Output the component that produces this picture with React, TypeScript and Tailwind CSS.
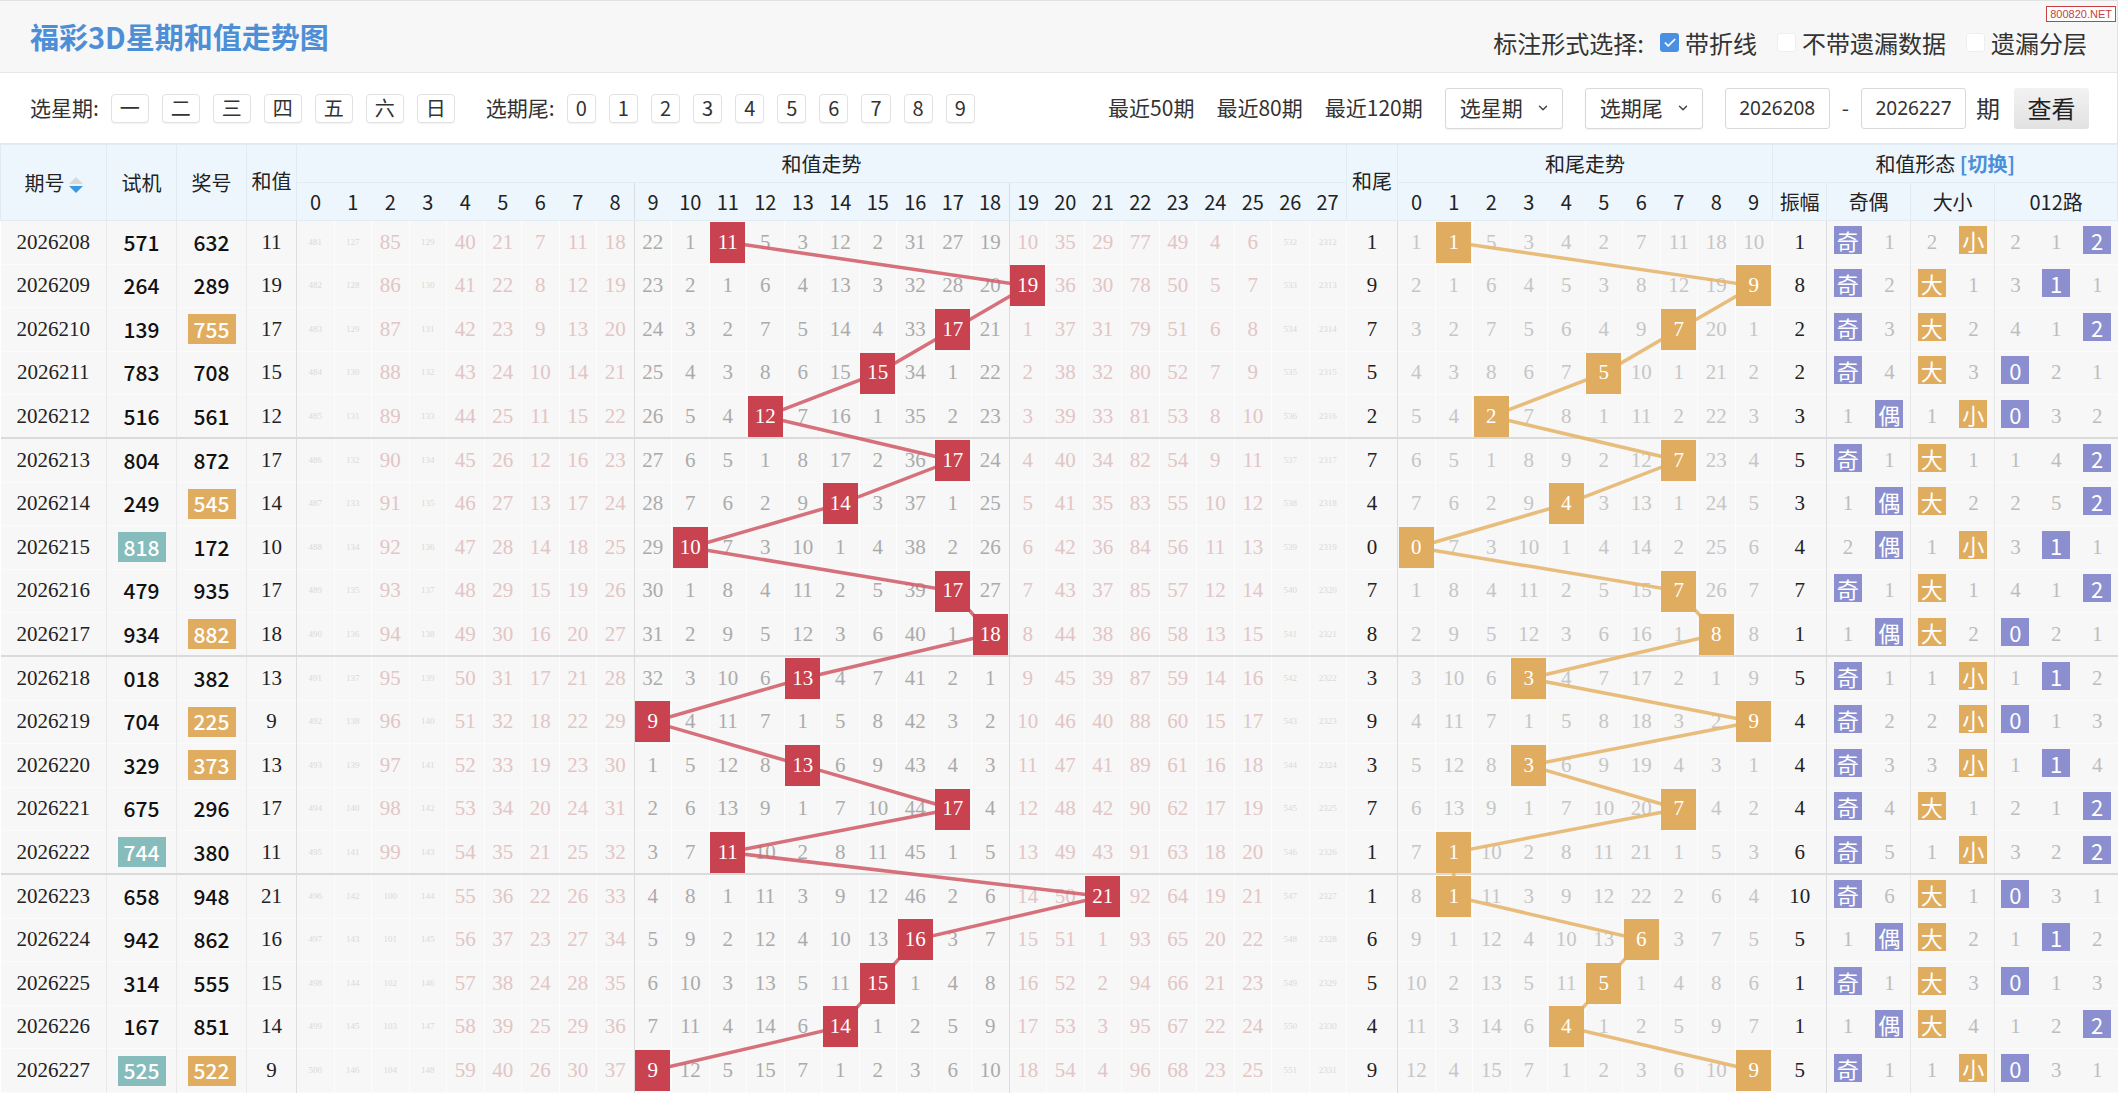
import { useLayoutEffect, useRef, useState } from 'react';
import { ChevronDown, Check } from 'lucide-react';

// ============================================================
// 数据
// ============================================================

const DRAWS: [string, string, string][] = [
  ['2026208', '571', '632'],
  ['2026209', '264', '289'],
  ['2026210', '139', '755'],
  ['2026211', '783', '708'],
  ['2026212', '516', '561'],
  ['2026213', '804', '872'],
  ['2026214', '249', '545'],
  ['2026215', '818', '172'],
  ['2026216', '479', '935'],
  ['2026217', '934', '882'],
  ['2026218', '018', '382'],
  ['2026219', '704', '225'],
  ['2026220', '329', '373'],
  ['2026221', '675', '296'],
  ['2026222', '744', '380'],
  ['2026223', '658', '948'],
  ['2026224', '942', '862'],
  ['2026225', '314', '555'],
  ['2026226', '167', '851'],
  ['2026227', '525', '522'],
];

// 第一期的遗漏值（命中列随意）
const SUM_FIRST = [481, 127, 85, 129, 40, 21, 7, 11, 18, 22, 1, 0, 5, 3, 12, 2, 31, 27, 19, 10, 35, 29, 77, 49, 4, 6, 532, 2312];
const TAIL_FIRST = [1, 0, 5, 3, 4, 2, 7, 11, 18, 10];

const isPair = (n: string) => {
  const s = new Set(n.split(''));
  return s.size === 2;
};

type Row = {
  no: string;
  test: string;
  win: string;
  sum: number;
  tail: number;
  amp: number;
  sums: number[];
  tails: number[];
  oe: [number, number];
  bs: [number, number];
  mod: [number, number, number];
};

function buildRows(): Row[] {
  const sm = SUM_FIRST.map((v) => v - 1);
  const tm = TAIL_FIRST.map((v) => v - 1);
  let oe: [number, number] = [0, 0];
  let bs: [number, number] = [1, 0];
  let md: [number, number, number] = [1, 0, 0];
  let prev = 10;
  return DRAWS.map(([no, test, win]) => {
    const sum = win.split('').reduce((a, d) => a + Number(d), 0);
    const tail = sum % 10;
    const sums = sm.map((v, c) => (c === sum ? -1 : v + 1));
    sums.forEach((v, c) => (sm[c] = v === -1 ? 0 : v));
    const tails = tm.map((v, c) => (c === tail ? -1 : v + 1));
    tails.forEach((v, c) => (tm[c] = v === -1 ? 0 : v));
    const odd = sum % 2 === 1 ? 0 : 1;
    oe = oe.map((v, i) => (i === odd ? -1 : v + 1)) as [number, number];
    const rOe = [...oe] as [number, number];
    oe = oe.map((v) => (v === -1 ? 0 : v)) as [number, number];
    const big = sum >= 14 ? 0 : 1;
    bs = bs.map((v, i) => (i === big ? -1 : v + 1)) as [number, number];
    const rBs = [...bs] as [number, number];
    bs = bs.map((v) => (v === -1 ? 0 : v)) as [number, number];
    const m = sum % 3;
    md = md.map((v, i) => (i === m ? -1 : v + 1)) as [number, number, number];
    const rMd = [...md] as [number, number, number];
    md = md.map((v) => (v === -1 ? 0 : v)) as [number, number, number];
    const amp = Math.abs(sum - prev);
    prev = sum;
    return { no, test, win, sum, tail, amp, sums, tails, oe: rOe, bs: rBs, mod: rMd };
  });
}

const ROWS = buildRows();

// ============================================================
// 小组件
// ============================================================

function SortIcon() {
  return (
    <span className="ml-1 inline-flex flex-col gap-[2px] align-middle">
      <span className="h-0 w-0 border-x-[7px] border-b-[7px] border-x-transparent border-b-[#d3d9de]" />
      <span className="h-0 w-0 border-x-[7px] border-t-[7px] border-x-transparent border-t-[#3a98de]" />
    </span>
  );
}

function Box({ checked, label }: { checked?: boolean; label: string }) {
  return (
    <span className="flex items-center gap-[6px]">
      {checked ? (
        <span className="flex h-[19px] w-[19px] items-center justify-center rounded-[3px] bg-[#4a90e2]">
          <Check className="h-[14px] w-[14px] text-white" strokeWidth={3} />
        </span>
      ) : (
        <span className="h-[19px] w-[19px] rounded-[3px] border border-[#eeeeee] bg-white" />
      )}
      {label}
    </span>
  );
}

function Chip({ t }: { t: string }) {
  return (
    <span className="flex h-[29px] items-center rounded-[4px] border border-[#e2e2e2] bg-white px-[8px] text-[20px] leading-none shadow-[0_1px_1px_rgba(0,0,0,0.05)]">
      {t}
    </span>
  );
}

function Badge({ t, orange }: { t: string; orange?: boolean }) {
  return (
    <span
      className={
        orange
          ? 'inline-flex h-[28px] w-[28px] items-center justify-center bg-[#e0ad5f] font-["Noto_Sans_CJK_SC",sans-serif] text-[22px] leading-none text-white'
          : 'inline-flex h-[28px] w-[28px] items-center justify-center bg-[#8b8fd0] font-["Noto_Sans_CJK_SC",sans-serif] text-[22px] leading-none text-white'
      }
    >
      {t}
    </span>
  );
}

function Select({ t }: { t: string }) {
  return (
    <span className="ml-[22px] flex h-[41px] w-[118px] items-center justify-between rounded-[3px] border border-[#d9d9d9] bg-white pl-[14px] pr-[12px] shadow-[0_1px_2px_rgba(0,0,0,0.06)]">
      {t}
      <ChevronDown className="h-[14px] w-[14px] text-[#444]" strokeWidth={2.5} />
    </span>
  );
}

// ============================================================
// 主组件
// ============================================================

export default function App() {
  const wrapRef = useRef<HTMLDivElement>(null);
  const [lines, setLines] = useState({ sum: '', tail: '', w: 0, h: 0 });

  // 折线：测量命中格中心
  useLayoutEffect(() => {
    const measure = () => {
      const el = wrapRef.current;
      if (!el) return;
      const base = el.getBoundingClientRect();
      const pts = (k: string) =>
        Array.from(el.querySelectorAll(`[data-line="${k}"]`))
          .map((n) => {
            const r = n.getBoundingClientRect();
            return `${r.left + r.width / 2 - base.left},${r.top + r.height / 2 - base.top}`;
          })
          .join(' ');
      setLines({ sum: pts('sum'), tail: pts('tail'), w: base.width, h: base.height });
    };
    measure();
    document.fonts?.ready.then(measure);
  }, []);

  const th = 'h-[38px] p-0 text-center align-middle text-[20px] font-normal text-[#222] border border-[#e1ebf3]';
  const td = 'h-[43.6px] p-0 text-center align-middle';

  return (
    <div className="relative w-[2118px] border-r border-t border-[#e3e3e3] bg-white font-['Noto_Sans_CJK_SC',sans-serif] text-[#333]">
      {/* 水印 */}
      <div className="absolute right-[1px] top-[5px] z-20 border border-[#c94040] bg-white px-[3px] font-['Liberation_Sans',sans-serif] text-[11px] leading-[14px] text-[#c94040]">
        800820.NET
      </div>

      {/* 标题栏 */}
      <div className="flex h-[72px] items-center justify-between border-b border-[#e6e6e6] bg-[#f7f7f7] pl-[30px] pr-[30px]">
        <h1 className="text-[29px] font-bold text-[#4d8fd6]">福彩3D星期和值走势图</h1>
        <div className="flex items-center gap-[20px] pt-[12px] text-[24px] text-[#333]">
          <span className="flex items-center gap-[16px]">
            标注形式选择:
            <Box checked label="带折线" />
          </span>
          <Box label="不带遗漏数据" />
          <Box label="遗漏分层" />
        </div>
      </div>

      {/* 筛选栏 */}
      <div className="flex h-[71px] items-center border-b border-[#e6e6e6] pl-[30px] pr-[28px] text-[21px]">
        <span className="mr-[12px]">选星期:</span>
        <div className="flex gap-[13px]">
          {['一', '二', '三', '四', '五', '六', '日'].map((d) => (
            <Chip key={d} t={d} />
          ))}
        </div>
        <span className="ml-[31px] mr-[12px]">选期尾:</span>
        <div className="flex gap-[13px]">
          {['0', '1', '2', '3', '4', '5', '6', '7', '8', '9'].map((d) => (
            <Chip key={d} t={d} />
          ))}
        </div>
        <div className="ml-auto flex items-center">
          <span>最近50期</span>
          <span className="ml-[22px]">最近80期</span>
          <span className="ml-[22px]">最近120期</span>
          <Select t="选星期" />
          <Select t="选期尾" />
          <span className="ml-[22px] flex h-[41px] w-[105px] items-center justify-center rounded-[3px] border border-[#d9d9d9] bg-white font-['Noto_Sans',sans-serif] text-[19px]">
            2026208
          </span>
          <span className="mx-[12px]">-</span>
          <span className="flex h-[41px] w-[105px] items-center justify-center rounded-[3px] border border-[#d9d9d9] bg-white font-['Noto_Sans',sans-serif] text-[19px]">
            2026227
          </span>
          <span className="ml-[10px] text-[24px]">期</span>
          <span className="ml-[14px] flex h-[41px] w-[75px] items-center justify-center rounded-[3px] bg-gradient-to-b from-[#f2f2f2] to-[#e2e2e2] text-[24px] text-[#222]">
            查看
          </span>
        </div>
      </div>

      {/* 走势表 */}
      <div ref={wrapRef} className="relative">
        <svg
          className="pointer-events-none absolute left-0 top-0 z-[5]"
          width={lines.w}
          height={lines.h}
        >
          <polyline points={lines.sum} fill="none" stroke="#d2606d" strokeWidth={3.5} strokeOpacity={0.9} />
          <polyline points={lines.tail} fill="none" stroke="#e6b66e" strokeWidth={3.5} strokeOpacity={0.9} />
        </svg>

        <table className="w-[2117px] table-fixed border-collapse">
          <colgroup>
            <col className="w-[106px]" />
            <col className="w-[70px]" />
            <col className="w-[70px]" />
            <col className="w-[50px]" />
            {SUM_FIRST.map((_, i) => (
              <col key={'s' + i} className="w-[37.5px]" />
            ))}
            <col className="w-[51px]" />
            {TAIL_FIRST.map((_, i) => (
              <col key={'t' + i} className="w-[37.5px]" />
            ))}
            <col className="w-[54px]" />
            <col className="w-[42px]" />
            <col className="w-[42px]" />
            <col className="w-[42px]" />
            <col className="w-[42px]" />
            <col className="w-[41px]" />
            <col className="w-[41px]" />
            <col className="w-[41px]" />
          </colgroup>
          <thead className="bg-[#eef6fd]">
            <tr>
              <th rowSpan={2} className={th + ' font-bold text-[#111]'}>
                期号
                <SortIcon />
              </th>
              <th rowSpan={2} className={th}>试机</th>
              <th rowSpan={2} className={th}>奖号</th>
              <th rowSpan={2} className={th + ' pb-[4px]'}>和值</th>
              <th colSpan={28} className={th}>和值走势</th>
              <th rowSpan={2} className={th + ' pb-[4px]'}>和尾</th>
              <th colSpan={10} className={th}>和尾走势</th>
              <th colSpan={8} className={th}>
                和值形态 <span className="font-bold text-[#4a8fd8]">[切换]</span>
              </th>
            </tr>
            <tr>
              {SUM_FIRST.map((_, i) => (
                <th
                  key={'hs' + i}
                  className={
                    i === 8 || i === 18
                      ? 'h-[38px] border-y border-r border-[#e1ebf3] border-r-[#d8dde2] p-0 font-normal text-[20px] text-[#222]'
                      : 'h-[38px] border-y border-[#e1ebf3] p-0 font-normal text-[20px] text-[#222]'
                  }
                >
                  {i}
                </th>
              ))}
              {TAIL_FIRST.map((_, i) => (
                <th key={'ht' + i} className="h-[38px] border-y border-[#e1ebf3] p-0 font-normal text-[20px] text-[#222]">
                  {i}
                </th>
              ))}
              <th className={th}>振幅</th>
              <th colSpan={2} className={th}>奇偶</th>
              <th colSpan={2} className={th}>大小</th>
              <th colSpan={3} className={th}>012路</th>
            </tr>
          </thead>
          <tbody className="bg-[#f7f7f7] font-['Liberation_Serif',serif] text-[21px]">
            {ROWS.map((r, ri) => (
              <tr
                key={r.no}
                className={
                  ri % 5 === 4 && ri !== ROWS.length - 1
                    ? 'border-b-2 border-b-[#dadada]'
                    : 'border-b border-b-[#fbfbfb]'
                }
              >
                <td className={td + ' border-r border-[#e9e9e9] text-[#222]'}>{r.no}</td>
                <td className={td + " border-r border-[#e9e9e9] font-['Noto_Sans_CJK_SC',sans-serif] text-[21px] font-medium text-[#111]"}>
                  {isPair(r.test) ? (
                    <span className="inline-flex h-[30px] w-[48px] items-center justify-center bg-[#86bcbc] text-white">{r.test}</span>
                  ) : (
                    r.test
                  )}
                </td>
                <td className={td + " border-r border-[#e9e9e9] font-['Noto_Sans_CJK_SC',sans-serif] text-[21px] font-medium text-[#111]"}>
                  {isPair(r.win) ? (
                    <span className="inline-flex h-[30px] w-[48px] items-center justify-center bg-[#e0ad60] text-white">{r.win}</span>
                  ) : (
                    r.win
                  )}
                </td>
                <td className={td + ' border-r border-[#dedede] text-[#222]'}>{r.sum}</td>
                {r.sums.map((v, c) => (
                  <td
                    key={'s' + c}
                    className={
                      td +
                      (c === 8 || c === 18 ? ' border-r border-r-[#dcdcdc]' : ' border-r border-r-[#fdfdfd]') +
                      (v >= 100
                        ? ' text-[9px] text-[#d9d9d9]'
                        : c >= 9 && c <= 18
                          ? ' text-[#ababab]'
                          : ' text-[#e2c5c5]')
                    }
                  >
                    {v === -1 ? (
                      <span data-line="sum" className="relative z-10 inline-flex h-[41px] w-[35px] items-center justify-center bg-[#c8424f] text-white">
                        {r.sum}
                      </span>
                    ) : (
                      v
                    )}
                  </td>
                ))}
                <td className={td + ' border-x border-[#dcdcdc] text-[#222]'}>{r.tail}</td>
                {r.tails.map((v, c) => (
                  <td key={'t' + c} className={td + ' border-r border-r-[#fdfdfd] text-[#c6c6c6]'}>
                    {v === -1 ? (
                      <span data-line="tail" className="relative z-10 inline-flex h-[41px] w-[35px] items-center justify-center bg-[#e0ad60] text-white">
                        {r.tail}
                      </span>
                    ) : (
                      v
                    )}
                  </td>
                ))}
                <td className={td + ' border-x border-[#dcdcdc] text-[#222]'}>{r.amp}</td>
                <td className={td + ' text-[#bdbdbd]'}>{r.oe[0] === -1 ? <Badge t="奇" /> : r.oe[0]}</td>
                <td className={td + ' border-r border-[#e6e6e6] text-[#bdbdbd]'}>{r.oe[1] === -1 ? <Badge t="偶" /> : r.oe[1]}</td>
                <td className={td + ' text-[#bdbdbd]'}>{r.bs[0] === -1 ? <Badge t="大" orange /> : r.bs[0]}</td>
                <td className={td + ' border-r border-[#e6e6e6] text-[#bdbdbd]'}>{r.bs[1] === -1 ? <Badge t="小" orange /> : r.bs[1]}</td>
                {r.mod.map((v, i) => (
                  <td key={'m' + i} className={td + ' text-[#bdbdbd]'}>
                    {v === -1 ? <Badge t={String(i)} /> : v}
                  </td>
                ))}
              </tr>
            ))}
          </tbody>
        </table>
      </div>
    </div>
  );
}
